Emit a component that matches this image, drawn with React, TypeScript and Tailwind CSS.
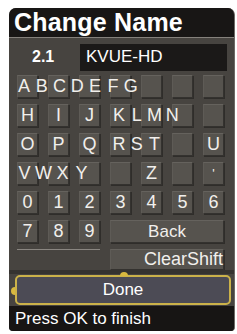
import React from "react";

const KEY =
  "flex items-center justify-center bg-[#56534e] border border-[#34322f] border-t-[#65625d] border-l-[#5e5b56] shadow-[1px_1px_0_#2f2d2a]";

function Letters({ text, slot, className }: { text: string; slot: string; className: string }) {
  return (
    <div className={`flex items-center z-10 pointer-events-none ${className}`}>
      {text.split("").map((c, i) => (
        <span key={i} className={`${slot} text-center`}>
          {c}
        </span>
      ))}
    </div>
  );
}

export default function App() {
  return (
    <div className="w-[237px] h-[334px] bg-white pt-[8px] pl-[9px] pr-[2px] font-['Liberation_Sans',Arial,sans-serif] text-[#f1efec] overflow-hidden">
      <div className="w-[226px] h-[323px] bg-[#474440] rounded-t-[7px] rounded-b-[4px] border-r border-[#6d6a66] flex flex-col overflow-hidden">
        {/* Title */}
        <div className="h-[34px] bg-[#181615] border-b border-[#85817c] flex items-center pl-[5px]">
          <span className="text-[25px] font-bold tracking-[0.2px] text-white leading-none">Change Name</span>
        </div>

        {/* Channel */}
        <div className="flex items-center h-[27px] mt-[6px]">
          <span className="w-[71px] pl-[23px] text-[16px] font-bold text-white">2.1</span>
          <div className="w-[147px] h-[27px] bg-[#1b1918] flex items-center pl-[6px] text-[17px] text-white">
            KVUE-HD
          </div>
        </div>

        {/* Keys */}
        <div className="mt-[4px] ml-[8px] grid grid-cols-[repeat(7,21px)] auto-rows-[23px] gap-x-[10px] gap-y-[6px] text-[18px] leading-none">
          {/* row 1 */}
          <div className={`${KEY} row-start-1 col-start-1`} />
          <div className={`${KEY} row-start-1 col-start-2`} />
          <div className={`${KEY} row-start-1 col-start-3`} />
          <div className={`${KEY} row-start-1 col-start-4`} />
          <div className={`${KEY} row-start-1 col-start-5`} />
          <div className={`${KEY} row-start-1 col-start-6`} />
          <div className={`${KEY} row-start-1 col-start-7`} />
          <Letters text="ABCDEFG" slot="w-[17.8px]" className="row-start-1 col-start-1 col-span-5 -ml-[2px]" />

          {/* row 2 */}
          <div className={`${KEY} row-start-2 col-start-1`}>H</div>
          <div className={`${KEY} row-start-2 col-start-2`}>I</div>
          <div className={`${KEY} row-start-2 col-start-3`}>J</div>
          <div className={`${KEY} row-start-2 col-start-4`} />
          <div className={`${KEY} row-start-2 col-start-5`} />
          <div className={`${KEY} row-start-2 col-start-6`} />
          <div className={`${KEY} row-start-2 col-start-7`} />
          <Letters text="KLMN" slot="w-[17.8px]" className="row-start-2 col-start-4 col-span-3" />

          {/* row 3 */}
          <div className={`${KEY} row-start-3 col-start-1`}>O</div>
          <div className={`${KEY} row-start-3 col-start-2`}>P</div>
          <div className={`${KEY} row-start-3 col-start-3`}>Q</div>
          <div className={`${KEY} row-start-3 col-start-4`} />
          <div className={`${KEY} row-start-3 col-start-5`} />
          <div className={`${KEY} row-start-3 col-start-6`} />
          <div className={`${KEY} row-start-3 col-start-7`}>U</div>
          <Letters text="RST" slot="w-[17.8px]" className="row-start-3 col-start-4 col-span-3" />

          {/* row 4 */}
          <div className={`${KEY} row-start-4 col-start-1`} />
          <div className={`${KEY} row-start-4 col-start-2`} />
          <div className={`${KEY} row-start-4 col-start-3`} />
          <div className={`${KEY} row-start-4 col-start-4`} />
          <div className={`${KEY} row-start-4 col-start-5`}>Z</div>
          <div className={`${KEY} row-start-4 col-start-6`} />
          <div className={`${KEY} row-start-4 col-start-7 text-[13px]`}>'</div>
          <Letters text="VWXY" slot="w-[19px]" className="row-start-4 col-start-1 col-span-4 -ml-[2px]" />

          {/* row 5 */}
          {["0", "1", "2", "3", "4", "5", "6"].map((d) => (
            <div key={d} className={`${KEY} row-start-5`}>
              {d}
            </div>
          ))}

          {/* row 6 */}
          <div className={`${KEY} row-start-6 col-start-1`}>7</div>
          <div className={`${KEY} row-start-6 col-start-2`}>8</div>
          <div className={`${KEY} row-start-6 col-start-3`}>9</div>
          <div className={`${KEY} row-start-6 col-start-4 col-span-4 text-[17px]`}>Back</div>

          {/* row 7 */}
          <div className="row-start-7 col-start-1 col-span-3 h-[20px] border-t border-[#8a8681]" />
          <div className={`${KEY} row-start-7 col-start-4 col-span-4 h-[21px] justify-end pr-0 whitespace-nowrap`}>
            ClearShift
          </div>
        </div>

        {/* dark band */}
        <div className="h-[5px] mt-[-2px] bg-[#353330]" />

        {/* Done */}
        <div className="relative mt-[1px] ml-[6px] w-[216px] h-[30px] rounded-[5px] border-2 border-[#cbb24a] bg-[#4c4b55] flex items-center justify-center text-[17px] text-white">
          Done
          <span className="absolute -top-[5px] left-[103px] w-[8px] h-[4px] rounded-t-full bg-[#d9b93f]" />
          <span className="absolute top-[10px] -left-[6px] w-[4px] h-[8px] rounded-l-full bg-[#d9b93f]" />
        </div>

        {/* Footer */}
        <div className="mt-[1px] flex-1 bg-[#171514] flex items-center pl-[6px] text-[17px] text-white">
          Press OK to finish
        </div>
      </div>
    </div>
  );
}
